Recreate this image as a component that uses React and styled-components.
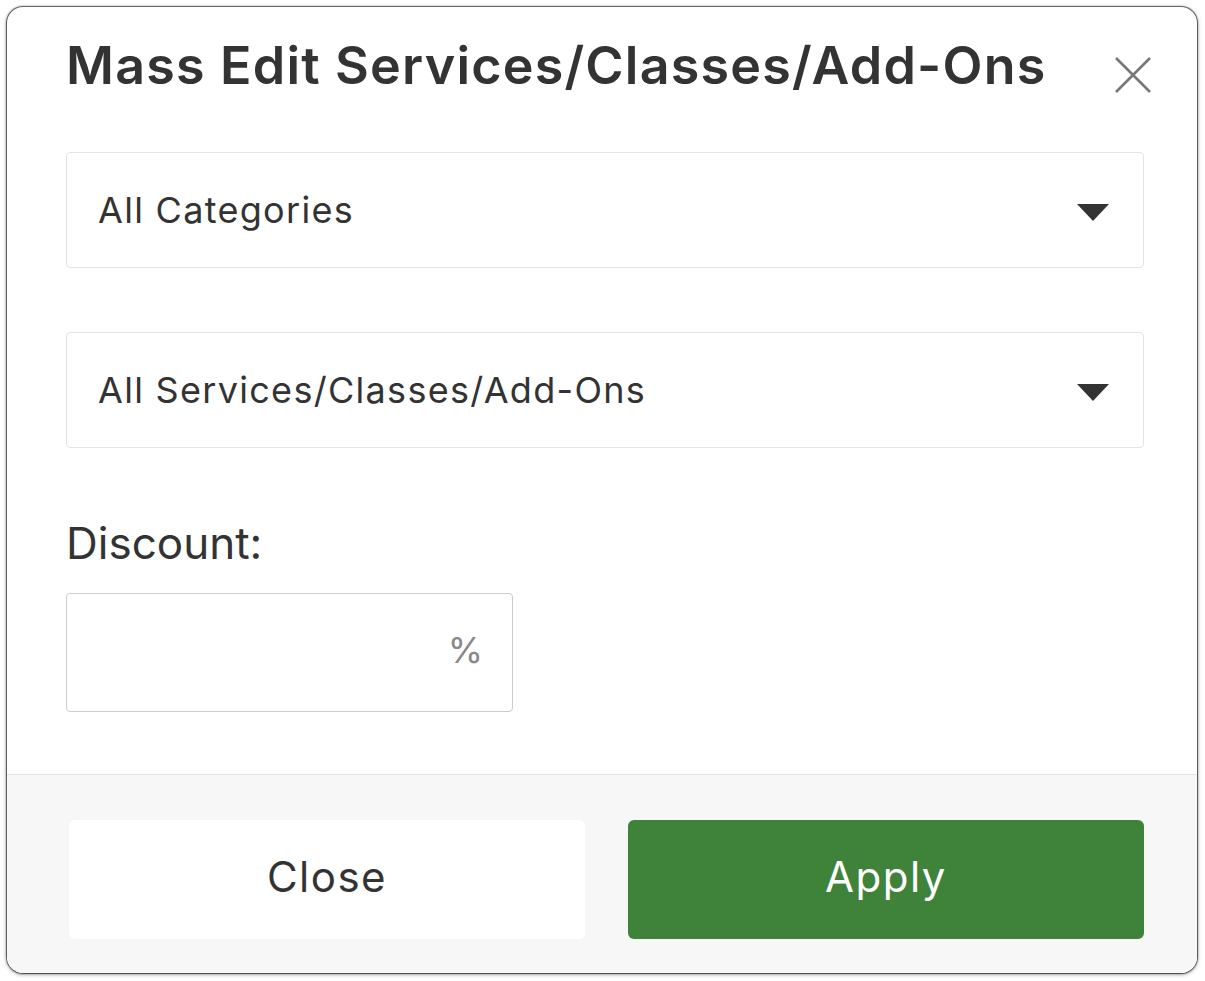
import React, { useState } from "react";
import styled, { createGlobalStyle } from "styled-components";

const GlobalStyle = createGlobalStyle`
  html, body {
    margin: 0;
    padding: 0;
    background: #ffffff;
  }
  body {
    font-family: "Inter", "Liberation Sans", sans-serif;
    color: #333333;
  }
`;

const Page = styled.div`
  padding: 7px 8px 8px 7px;
`;

const Dialog = styled.div`
  width: 1190px;
  height: 966px;
  box-sizing: border-box;
  background: #ffffff;
  border-radius: 16px;
  box-shadow: 0 0 1px 1px rgba(0, 0, 0, 0.6), 0 1px 4px rgba(0, 0, 0, 0.5);
  display: flex;
  flex-direction: column;
  overflow: hidden;
`;

const Header = styled.div`
  display: flex;
  align-items: flex-start;
  justify-content: space-between;
  padding: 28px 45px 0 59px;
`;

const Title = styled.h2`
  margin: 0;
  font-size: 52px;
  font-weight: 600;
  line-height: 62px;
  letter-spacing: 1.2px;
  color: #333333;
`;

const CloseX = styled.button`
  border: 0;
  background: transparent;
  padding: 0;
  margin-top: 21px;
  width: 38px;
  height: 38px;
  cursor: pointer;
  color: #777777;
  display: flex;
`;

const Body = styled.div`
  flex: 1;
  padding: 55px 53px 0 59px;
  display: flex;
  flex-direction: column;
`;

const SelectBox = styled.div`
  height: 116px;
  box-sizing: border-box;
  border: 1px solid #e3e3e3;
  border-radius: 4px;
  display: flex;
  align-items: center;
  justify-content: space-between;
  padding: 0 34px 0 31px;
  margin-bottom: ${(p) => p.$gap || 0}px;
  font-size: 36px;
  letter-spacing: 1.3px;
  color: #333333;
  cursor: pointer;
`;

const SelectText = styled.span`
  margin-top: -1px;
`;

const Caret = styled.span`
  width: 0;
  height: 0;
  border-left: 16px solid transparent;
  border-right: 16px solid transparent;
  border-top: 17px solid #333333;
  margin-top: 4px;
`;

const Label = styled.label`
  display: block;
  margin-top: 68px;
  font-size: 44px;
  line-height: 54px;
  color: #333333;
`;

const InputWrap = styled.div`
  margin-top: 23px;
  width: 447px;
  height: 119px;
  box-sizing: border-box;
  border: 1px solid #cccccc;
  border-radius: 4px;
  display: flex;
  align-items: center;
  padding: 0 29px 0 20px;
`;

const Input = styled.input`
  flex: 1;
  min-width: 0;
  border: 0;
  outline: none;
  background: transparent;
  font-family: inherit;
  font-size: 36px;
  color: #333333;
`;

const Suffix = styled.span`
  font-size: 36px;
  color: #888888;
  margin-top: -6px;
`;

const Footer = styled.div`
  border-top: 1px solid #e4e4e4;
  background: #f7f7f7;
  padding: 45px 52px 34px 62px;
  display: grid;
  grid-template-columns: 516px 516px;
  column-gap: 43px;
`;

const Button = styled.button`
  height: 119px;
  border: 0;
  border-radius: 6px;
  font-family: inherit;
  font-size: 42px;
  letter-spacing: 1.5px;
  cursor: pointer;
  background: ${(p) => (p.$primary ? "#3e8339" : "#ffffff")};
  color: ${(p) => (p.$primary ? "#ffffff" : "#333333")};
  padding: 0 0 6px;
`;

export default function App() {
  const [discount, setDiscount] = useState("");

  return (
    <Page>
      <GlobalStyle />
      <Dialog>
        <Header>
          <Title>Mass Edit Services/Classes/Add-Ons</Title>
          <CloseX aria-label="Close">
            <svg width="38" height="38" viewBox="0 0 38 38">
              <path
                d="M2 2 L36 36 M36 2 L2 36"
                stroke="currentColor"
                strokeWidth="2.6"
                fill="none"
              />
            </svg>
          </CloseX>
        </Header>

        <Body>
          <SelectBox $gap={64}>
            <SelectText>All Categories</SelectText>
            <Caret />
          </SelectBox>
          <SelectBox>
            <SelectText>All Services/Classes/Add-Ons</SelectText>
            <Caret />
          </SelectBox>

          <Label htmlFor="discount">Discount:</Label>
          <InputWrap>
            <Input
              id="discount"
              value={discount}
              onChange={(e) => setDiscount(e.target.value)}
            />
            <Suffix>%</Suffix>
          </InputWrap>
        </Body>

        <Footer>
          <Button>Close</Button>
          <Button $primary>Apply</Button>
        </Footer>
      </Dialog>
    </Page>
  );
}
